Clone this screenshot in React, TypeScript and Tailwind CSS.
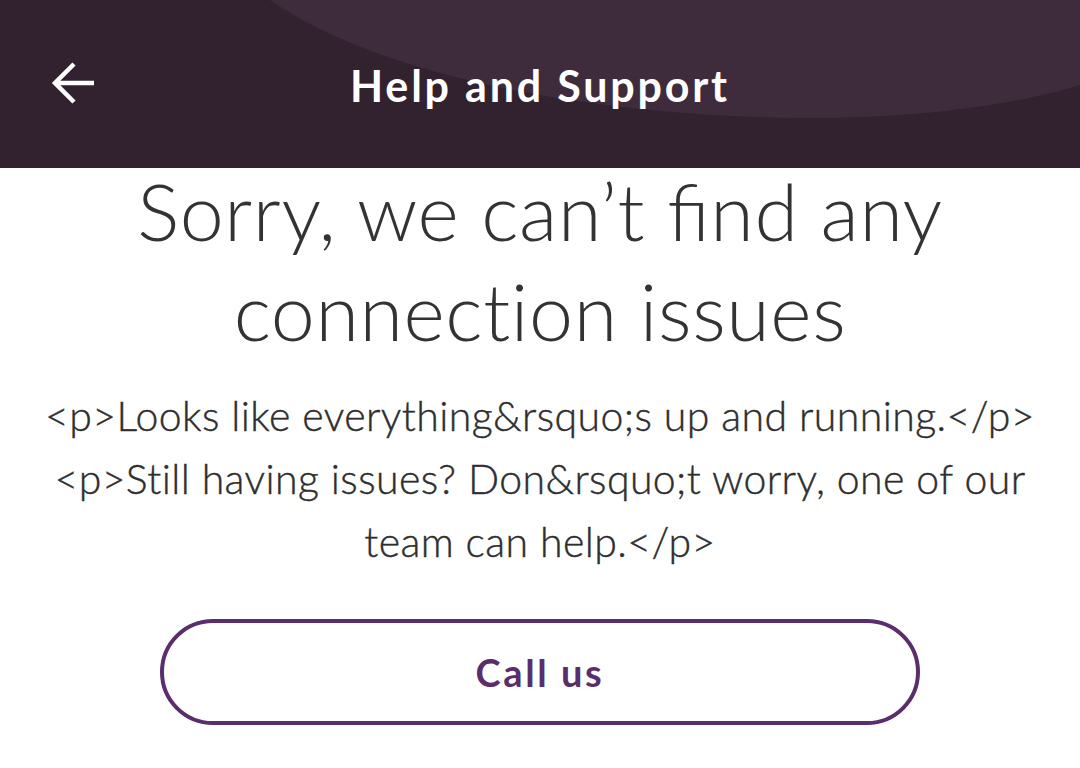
import React from "react";

export default function App() {
  return (
    <div className="w-[1080px] h-[768px] bg-white overflow-hidden flex flex-col" style={{ fontFamily: "Lato, 'Noto Sans', sans-serif" }}>
      <header className="relative h-[168px] bg-[#32222f] flex items-center justify-center shrink-0 overflow-hidden">
        <svg className="absolute inset-0" width="1080" height="168" viewBox="0 0 1080 168">
          <path d="M270 0 C 400 90, 650 120, 830 118 C 950 116, 1030 100, 1080 85 L1080 0 Z" fill="#3e2c3c" />
        </svg>
        <button className="absolute left-[50px] top-[61px] w-[48px] h-[44px] flex items-center justify-center">
          <svg width="48" height="44" viewBox="0 0 48 44">
            <path d="M44 22 H5 M24 3 L5 22 L24 41" stroke="#ffffff" strokeWidth="4.5" fill="none" strokeLinecap="butt" strokeLinejoin="miter" />
          </svg>
        </button>
        <h1 className="relative text-white text-[43px] font-bold leading-none mt-[2px] tracking-[2.8px]">Help and Support</h1>
      </header>
      <main className="flex flex-col items-center [font-variant-ligatures:none]">
        <h2 className="-mt-[7px] text-[79px] leading-[100px] font-light text-[#333333] text-center tracking-[0.6px]">
          Sorry, we can’t ﬁnd any
          <br />
          connection issues
        </h2>
        <div className="mt-[23px] text-[41px] leading-[63px] font-light text-[#2e2e2e] text-center tracking-[0.4px] px-[20px] [-webkit-text-stroke:0.4px_#2e2e2e]">
          &lt;p&gt;Looks like everything&amp;rsquo;s up and running.&lt;/p&gt;
          <br />
          &lt;p&gt;Still having issues? Don&amp;rsquo;t worry, one of our
          <br />
          team can help.&lt;/p&gt;
        </div>
        <button className="mt-[46px] w-[760px] h-[106px] rounded-full border-[4.5px] border-[#5a2d6c] flex items-center justify-center text-[#5a2d6c] text-[38px] font-bold tracking-[2.6px]">
          Call us
        </button>
      </main>
    </div>
  );
}
